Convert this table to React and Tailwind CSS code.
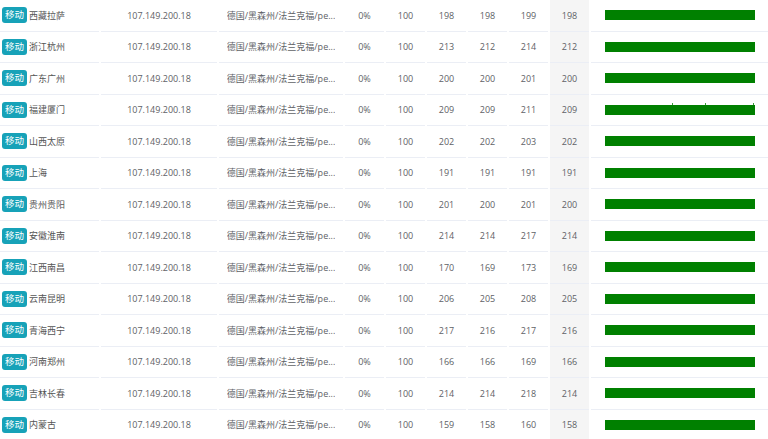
import React from 'react';

const rows = [
  ['西藏拉萨', 198, 198, 199, 198],
  ['浙江杭州', 213, 212, 214, 212],
  ['广东广州', 200, 200, 201, 200],
  ['福建厦门', 209, 209, 211, 209, true],
  ['山西太原', 202, 202, 203, 202],
  ['上海', 191, 191, 191, 191],
  ['贵州贵阳', 201, 200, 201, 200],
  ['安徽淮南', 214, 214, 217, 214],
  ['江西南昌', 170, 169, 173, 169],
  ['云南昆明', 206, 205, 208, 205],
  ['青海西宁', 217, 216, 217, 216],
  ['河南郑州', 166, 166, 169, 166],
  ['吉林长春', 214, 214, 218, 214],
  ['内蒙古', 159, 158, 160, 158],
];

const cell = 'flex items-center justify-center border-b border-[#ebeef5]';

const Row = ({ city, a, b, c, d, ticks }) => (
  <div className="flex h-[31.5px] gap-[2px] shrink-0">
    <div className="flex items-center w-[99px] pl-[2px] border-b border-[#ebeef5]">
      <span className="rounded-[3px] bg-[#17a2b8] px-[3px] leading-[16px] text-white text-[9.5px]">移动</span>
      <span className="ml-[2px] text-[#555]">{city}</span>
    </div>
    <div className={`${cell} w-[116px]`}>107.149.200.18</div>
    <div className={`${cell} w-[124px] px-[6px]`}>
      <span className="truncate">德国/黑森州/法兰克福/pe...</span>
    </div>
    <div className={`${cell} w-[39px]`}>0%</div>
    <div className={`${cell} w-[39px]`}>100</div>
    <div className={`${cell} w-[39px]`}>{a}</div>
    <div className={`${cell} w-[39px]`}>{b}</div>
    <div className={`${cell} w-[39px]`}>{c}</div>
    <div className={`${cell} w-[39px] bg-[#f5f5f5]`}>{d}</div>
    <div className={`${cell} flex-1`}>
      <div className="relative h-[10px] w-[150px] bg-[#008000]">
        {ticks && (
          <>
            <span className="absolute -top-[2px] left-[67px] h-[2px] w-[1px] bg-[#3a9a3a]" />
            <span className="absolute -top-[2px] left-[100px] h-[2px] w-[1px] bg-[#3a9a3a]" />
            <span className="absolute -top-[2px] left-[148px] h-[2px] w-[1px] bg-[#3a9a3a]" />
          </>
        )}
      </div>
    </div>
  </div>
);

export default function App() {
  return (
    <div
      className="flex flex-col bg-white text-[9px] text-[#606266]"
      style={{ fontFamily: '"Open Sans", "Noto Sans CJK SC", sans-serif' }}
    >
      {rows.map(([city, a, b, c, d, ticks]) => (
        <Row key={city} city={city} a={a} b={b} c={c} d={d} ticks={ticks} />
      ))}
    </div>
  );
}
